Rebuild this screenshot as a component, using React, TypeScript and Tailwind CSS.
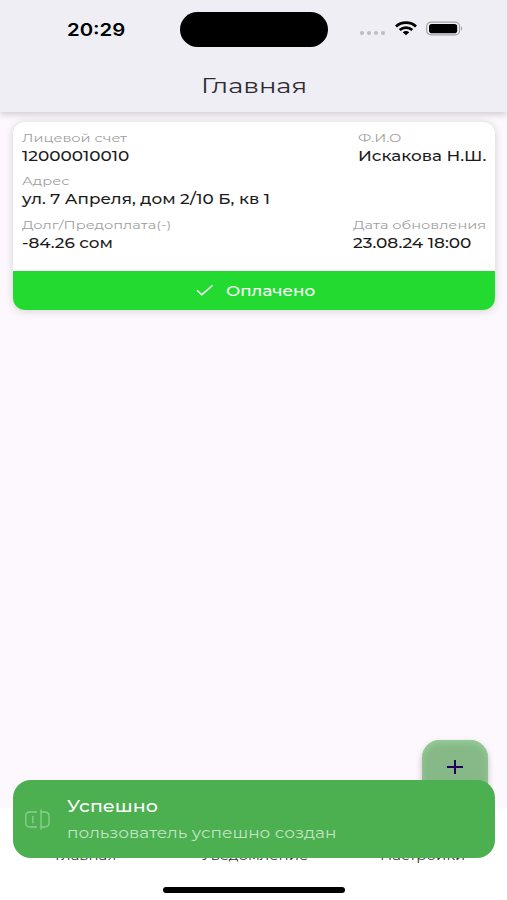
import * as React from "react"
import clsx from "clsx"

interface TextProps {
  className?: string
  children: React.ReactNode
}

// the app font is wide, so every line is stretched horizontally
const Wide = ({ className, children }: TextProps) => (
  <span className={clsx("block w-fit whitespace-nowrap", className)}>
    {children}
  </span>
)

const StatusBar = () => (
  <div className="flex h-[58px] items-start pt-3">
    <div className="w-[180px] pl-[67px] pt-2">
      <Wide className="origin-left scale-x-[1.16] font-['Inter',sans-serif] text-[17.5px] font-semibold leading-5 text-black">
        20:29
      </Wide>
    </div>
    <div className="h-[35px] w-[148px] rounded-full bg-black" />
    <div className="flex pl-8 pt-[8px]">
      <div className="flex gap-[3px] pt-[11px]">
        {[0, 1, 2, 3].map((i) => (
          <span key={i} className="size-1 rounded-full bg-[#bcbbc1]" />
        ))}
      </div>
      <svg
        className="ml-[10px] mt-[1px]"
        width="22"
        height="15"
        viewBox="0 0 22 15"
        fill="none"
        stroke="#000"
        strokeWidth="2.8"
      >
        <path d="M1 5.5C6.5 0.4 15.5 0.4 21 5.5" />
        <path d="M4.7 9C8.4 5.7 13.6 5.7 17.3 9" />
        <path d="M7.7 11.2C9.7 9.5 12.3 9.5 14.3 11.2L11 14.3Z" fill="#000" stroke="none" />
      </svg>
      <svg className="ml-2 mt-[1px]" width="38" height="15" viewBox="0 0 38 15">
        <rect x="1.6" y="1.1" width="33" height="12.8" rx="4.5" fill="none" stroke="#a4a3a8" strokeWidth="1.2" />
        <rect x="4" y="3" width="28.2" height="9.2" rx="2.8" fill="#000" />
        <path d="M36 5.4C37.6 6 37.6 8.8 36 9.6Z" fill="#a4a3a8" />
      </svg>
    </div>
  </div>
)

const Label = ({ className, children }: TextProps) => (
  <Wide className={clsx("origin-left scale-x-[1.215] text-[12px] leading-4 text-[#a0a0a0]", className)}>
    {children}
  </Wide>
)

const Value = ({ className, children }: TextProps) => (
  <Wide
    className={clsx(
      "mt-px origin-left text-[14px] font-medium leading-[18px] text-[#1c1c1c]",
      className,
    )}
  >
    {children}
  </Wide>
)

const AccountCard = () => (
  <section className="ml-[12.5px] mr-3 mt-[10px] overflow-hidden rounded-xl bg-white shadow-[0_1px_8px_rgba(0,0,0,0.17)]">
    <div className="flex h-[149px] flex-col gap-2 pl-[9.5px] pt-2">
      <div className="flex">
        <div className="w-[336px]">
          <Label>Лицевой счет</Label>
          <Value className="scale-x-[1.205]">12000010010</Value>
        </div>
        <div>
          <Label>Ф.И.О</Label>
          <Value className="scale-x-[1.2]">Искакова Н.Ш.</Value>
        </div>
      </div>
      <div>
        <Label>Адрес</Label>
        <Value className="scale-x-[1.2]">ул. 7 Апреля, дом 2/10 Б, кв 1</Value>
      </div>
      <div className="flex pt-[0.5px]">
        <div className="w-[330.5px]">
          <Label>Долг/Предоплата(-)</Label>
          <Value className="scale-x-[1.2]">-84.26 сом</Value>
        </div>
        <div>
          <Label>Дата обновления</Label>
          <Value className="scale-x-[1.21]">23.08.24 18:00</Value>
        </div>
      </div>
    </div>
    <div className="flex h-[38.5px] items-center bg-[#23db30] pl-[183.5px] text-white">
      <svg width="18" height="12" viewBox="0 0 18 12" fill="none" stroke="currentColor" strokeWidth="1.5">
        <path d="M1 6.2L5.8 10.7L16.6 1.2" />
      </svg>
      <Wide className="ml-3 origin-left scale-x-[1.2] pt-0.5 text-[14px] font-medium">Оплачено</Wide>
    </div>
  </section>
)

const Toast = () => (
  <div className="absolute left-[12.5px] right-3 top-[779.5px] flex h-[78px] rounded-[18px] bg-[#4caf50] pl-[11.5px] text-white">
    <svg
      className="mt-7"
      width="27"
      height="23"
      viewBox="0 0 27 23"
      fill="none"
      stroke="#8fcf92"
      strokeWidth="1.3"
      strokeLinecap="round"
    >
      <path d="M12.5 4H6C3 4 1.8 5.5 1.8 8V15C1.8 17.5 3 19 6 19H12.5" />
      <path d="M17 2V21M17 4H20C23.5 4 25 5.5 25 8V15C25 17.5 23.5 19 20 19H17" />
      <path d="M8.8 8.3V14.7" />
    </svg>
    <div className="pl-4 pt-4">
      <Wide className="origin-left scale-x-[1.19] text-[16px] font-medium leading-[22px]">
        Успешно
      </Wide>
      <Wide className="mt-[6px] origin-left scale-x-[1.21] text-[14px] leading-[18px] text-[#c3e6c5]">
        пользователь успешно создан
      </Wide>
    </div>
  </div>
)

export default function App() {
  return (
    <div className="relative flex h-[900px] w-[507px] flex-col overflow-hidden bg-[#fdf7fe] font-['Montserrat','Inter','Noto_Sans',sans-serif]">
      <header className="h-28 shrink-0 bg-[#efeef4] shadow-[0_3px_6px_rgba(0,0,0,0.16)]">
        <StatusBar />
        <div className="flex justify-center pl-[2px] pt-[13px]">
          <Wide className="scale-x-[1.23] text-[21px] leading-[30px] text-[#2d2c33]">Главная</Wide>
        </div>
      </header>
      <main className="flex flex-1 flex-col">
        <AccountCard />
        <button
          type="button"
          aria-label="Добавить"
          className="mb-[2px] ml-[422px] mt-auto flex h-[66px] w-[66px] justify-center rounded-[18px] bg-[#86b888] pt-[19px] shadow-[0_3px_6px_rgba(0,0,0,0.25),inset_0_3px_7px_#96cf9a]"
        >
          <svg width="18" height="16" viewBox="0 0 18 16" stroke="#21005d" strokeWidth="2">
            <path d="M1 8H17M9 1V15" />
          </svg>
        </button>
      </main>
      <nav className="h-[92px] shrink-0 bg-white text-[13px] text-[#333]">
        <div className="flex h-[57px] items-end leading-5">
          <div className="w-[145.5px] pl-[54.5px]">
            <Wide className="origin-left scale-x-[1.15]">Главная</Wide>
          </div>
          <div className="w-[179px] pl-[55px]">
            <Wide className="origin-left scale-x-[1.15]">Уведомление</Wide>
          </div>
          <div className="pl-[55px]">
            <Wide className="origin-left scale-x-[1.15]">Настройки</Wide>
          </div>
        </div>
        <div className="ml-[163px] mt-[22px] h-[5.5px] w-[182px] rounded-full bg-black" />
      </nav>
      <Toast />
    </div>
  )
}
